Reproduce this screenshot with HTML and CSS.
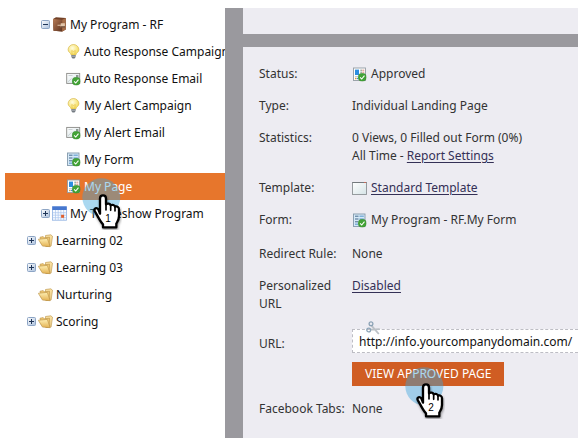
FILE: index.html
```html
<!DOCTYPE html>
<html lang="en">
<head>
<meta charset="utf-8">
<meta name="viewport" content="width=device-width, initial-scale=1">
<title>My Page</title>
<link rel="stylesheet" href="styles.css">
</head>
<body>
<svg class="sprite" aria-hidden="true">
  <defs>
    <linearGradient id="gold" x1="0" y1="0" x2="0" y2="1"><stop offset="0" stop-color="#fff0b4"/><stop offset="1" stop-color="#e3b152"/></linearGradient>
    <linearGradient id="brown" x1="0" y1="0" x2="1" y2="1"><stop offset="0" stop-color="#b77b56"/><stop offset="1" stop-color="#5e3420"/></linearGradient>
    <linearGradient id="paper" x1="0" y1="0" x2="1" y2="1"><stop offset="0" stop-color="#ffffff"/><stop offset="1" stop-color="#d5e3e6"/></linearGradient>
    <linearGradient id="steel" x1="0" y1="0" x2="1" y2="1"><stop offset="0" stop-color="#ffffff"/><stop offset="1" stop-color="#a9bfdc"/></linearGradient>
    <radialGradient id="glow" cx=".4" cy=".35" r=".7"><stop offset="0" stop-color="#fffde0"/><stop offset="1" stop-color="#f3d84e"/></radialGradient>
  </defs>
  <symbol id="plus" viewBox="0 0 9 9">
    <rect x=".5" y=".5" width="8" height="8" rx="1" fill="url(#steel)" stroke="#8da5c5"/>
    <path d="M2 4.5h5M4.5 2v5" stroke="#1f3558"/>
  </symbol>
  <symbol id="minus" viewBox="0 0 9 9">
    <rect x=".5" y=".5" width="8" height="8" rx="1" fill="url(#steel)" stroke="#8da5c5"/>
    <path d="M2 4.5h5" stroke="#1f3558"/>
  </symbol>
  <symbol id="check" viewBox="0 0 8 8">
    <circle cx="4" cy="4" r="3.8" fill="#43a336" stroke="#2c7f26" stroke-width=".4"/>
    <path d="M2 4.2l1.5 1.5L6.1 2.5" fill="none" stroke="#fff" stroke-width="1"/>
  </symbol>
  <symbol id="program" viewBox="0 0 15 15">
    <path d="M1 2L4 .3 13.8 1.100V12.500l-3.500 2-8.800-.7z" fill="#714026"/>
    <path d="M1 2l9.200.8v11.700L1.500 13.800z" fill="url(#brown)"/>
    <path d="M10.200 2.800l3.600-1.700V12.500l-3.600 2z" fill="#a66e49"/>
    <path d="M5.500 7.700h3.200V6.200h4.200v4H8.700V8.800H5.500z" fill="#e2c6aa"/>
    <path d="M9 9.900h4" stroke="#4c2a19"/>
  </symbol>
  <symbol id="bulb" viewBox="0 0 15 15">
    <path d="M7.500.5a5.300 5.300 0 0 0-5.400 5.300C2.100 8.300 5 9 5.200 11h4.600c.2-2 3.100-2.700 3.100-5.200A5.300 5.300 0 0 0 7.500.5z" fill="url(#glow)" stroke="#d9b94a" stroke-width=".7"/>
    <path d="M6.200 10.500L5.700 6.500l1.800 1 1.800-1-.5 4" fill="none" stroke="#e7c33f" stroke-width=".6"/>
    <path d="M5.300 11h4.400v2L8.500 14.500h-2L5.300 13z" fill="#747b82"/>
    <path d="M5.300 12.200h4.400" stroke="#c8cdd2" stroke-width=".7"/>
  </symbol>
  <symbol id="email" viewBox="0 0 15 15">
    <rect x=".7" y="2.400" width="13" height="10" fill="url(#paper)" stroke="#8a8a86" stroke-width=".9"/>
    <path d="M2 10.800L5.500 7.500M2.500 4.500h4" fill="none" stroke="#b9c2c4" stroke-width=".7"/>
    <rect x="10" y="4" width="2.400" height="2.400" fill="#8b9690"/>
    <use href="#check" x="6" y="6" width="8.500" height="8.500"/>
  </symbol>
  <symbol id="form" viewBox="0 0 15 15">
    <rect x="1.500" y="1" width="11.500" height="12.500" fill="#d6e9f8" stroke="#8399ab" stroke-width=".9"/>
    <path d="M3 3.200h3.500M3 6h3.500M3 8.800h3" stroke="#46698a"/>
    <path d="M7.500 3.200h4.300M7.500 6h4.300M3 11.200h3" stroke="#7fb0d8" stroke-width="1.400"/>
    <use href="#check" x="6" y="6" width="8.500" height="8.500"/>
  </symbol>
  <symbol id="page" viewBox="0 0 15 15">
    <rect x="1.500" y="1" width="12" height="12.500" fill="#fff" stroke="#929ba3" stroke-width=".9"/>
    <rect x="3" y="2.600" width="4" height="5.400" fill="#2d8ee0"/>
    <path d="M8.300 3.200h1.700M8.300 5.200h1.700" stroke="#7a8d7d"/>
    <path d="M10.300 3.200h2M10.300 5.200h2" stroke="#dd8674"/>
    <path d="M3 9.600h3" stroke="#b9c6d2"/>
    <path d="M3 11.500h1.500" stroke="#e59d35" stroke-width="1.300"/><path d="M4.800 11.500h1.500" stroke="#3a8ed6" stroke-width="1.300"/>
    <use href="#check" x="6" y="6" width="8.500" height="8.500"/>
  </symbol>
  <symbol id="calendar" viewBox="0 0 15 15">
    <rect x=".5" y=".8" width="14" height="13.400" fill="#f8fbff" stroke="#8db0e2" stroke-width=".8"/>
    <rect x=".3" y=".4" width="14.400" height="3.600" fill="#4677cf"/>
    <path d="M1 6.700h13M1 9.200h13M1 11.700h13M3.500 4v10M6.200 4v10M8.900 4v10M11.600 4v10" stroke="#a9c4ec" stroke-width=".7"/>
    <rect x="9.100" y="8.800" width="3" height="3" fill="#e0602e"/>
  </symbol>
  <symbol id="folder" viewBox="0 0 15 15">
    <path d="M7.500 2.500l5.300-.7 1.700 1.400-1.400 9.800-5.300.6z" fill="#f8dfa0" stroke="#b98e42" stroke-width=".6"/>
    <path d="M2 4.200l3.200-.6 1 1.200 5.300-.6.500 8-3 1-6-2.700z" fill="#efc873" stroke="#b98e42" stroke-width=".6"/>
    <path d="M.3 6.300l9-.9 2.900 8.300-7.700-.6z" fill="url(#gold)" stroke="#b98e42" stroke-width=".6"/>
  </symbol>
  <symbol id="template" viewBox="0 0 15 15">
    <rect x=".5" y="1.500" width="14" height="12" fill="url(#paper)" stroke="#8d9295" stroke-width=".9"/>
    <path d="M.5 1.500h14" stroke="#73797d"/><path d="M12 1.500h2" stroke="#c46c5c"/>
  </symbol>
  <symbol id="scissors" viewBox="0 0 15 15">
    <path d="M5.300 4.300L12.800 13M4 8.700l9.800-.6" stroke="#bcc1c6" stroke-width="1.800"/>
    <circle cx="5" cy="2.800" r="1.900" fill="none" stroke="#8ca3b6" stroke-width="1.300"/>
    <circle cx="2.700" cy="9" r="1.900" fill="none" stroke="#8ca3b6" stroke-width="1.300"/>
  </symbol>
  <symbol id="hand" viewBox="0 0 120 156">
    <path d="M54 107V62c0-13 18-13 18 0v17c5-4 12-2 14 3 5-3 12-1 13 4 6-2 12 1 12 8v20c0 11-4 16-8 23v11H63v-9c-7-7-12-17-17-26l-8-14c-3-9 6-11 11-5z" fill="#fff" stroke="#000" stroke-width="7" stroke-linejoin="round"/>
    <path d="M72 76v20M86 81v16M99 86v13" stroke="#000" stroke-width="5" stroke-linecap="round"/>
  </symbol>
</svg>

<main class="app">
  <nav class="tree" aria-label="Marketing activities">
    <ul class="tree-list">
      <li class="node level-2"><button class="toggle" aria-label="Collapse"><svg><use href="#minus"/></svg></button><svg class="icon"><use href="#program"/></svg><span>My Program - RF</span></li>
      <li class="node level-3"><svg class="icon"><use href="#bulb"/></svg><span>Auto Response Campaign</span></li>
      <li class="node level-3"><svg class="icon"><use href="#email"/></svg><span>Auto Response Email</span></li>
      <li class="node level-3"><svg class="icon"><use href="#bulb"/></svg><span>My Alert Campaign</span></li>
      <li class="node level-3"><svg class="icon"><use href="#email"/></svg><span>My Alert Email</span></li>
      <li class="node level-3"><svg class="icon"><use href="#form"/></svg><span>My Form</span></li>
      <li class="node level-3 selected"><svg class="icon"><use href="#page"/></svg><span>My Page</span>
        <svg class="pointer pointer-tree" viewBox="0 0 120 156"><circle cx="58" cy="58" r="57"/><use class="hand" href="#hand"/><text x="78" y="132">1</text></svg></li>
      <li class="node level-2"><button class="toggle" aria-label="Expand"><svg><use href="#plus"/></svg></button><svg class="icon"><use href="#calendar"/></svg><span>My Tradeshow Program</span></li>
      <li class="node level-1"><button class="toggle" aria-label="Expand"><svg><use href="#plus"/></svg></button><svg class="icon"><use href="#folder"/></svg><span>Learning 02</span></li>
      <li class="node level-1"><button class="toggle" aria-label="Expand"><svg><use href="#plus"/></svg></button><svg class="icon"><use href="#folder"/></svg><span>Learning 03</span></li>
      <li class="node level-1 leaf"><svg class="icon"><use href="#folder"/></svg><span>Nurturing</span></li>
      <li class="node level-1"><button class="toggle" aria-label="Expand"><svg><use href="#plus"/></svg></button><svg class="icon"><use href="#folder"/></svg><span>Scoring</span></li>
    </ul>
  </nav>
  <div class="content">
    <div class="panel header-panel"></div>
    <section class="panel details">
      <div class="row"><span>Status:</span><div class="with-icon"><svg class="icon"><use href="#page"/></svg>Approved</div></div>
      <div class="row"><span>Type:</span><div>Individual Landing Page</div></div>
      <div class="row"><span>Statistics:</span><div>0 Views, 0 Filled out Form (0%)<br>All Time - <a href="#">Report Settings</a></div></div>
      <div class="row"><span>Template:</span><div class="with-icon"><svg class="icon"><use href="#template"/></svg><a href="#">Standard Template</a></div></div>
      <div class="row group-end"><span>Form:</span><div class="with-icon"><svg class="icon"><use href="#form"/></svg>My Program - RF.My Form</div></div>
      <div class="row"><span>Redirect Rule:</span><div>None</div></div>
      <div class="row group-end"><span>Personalized URL</span><div><a href="#">Disabled</a></div></div>
      <div class="row url-row"><label for="url">URL:</label>
        <div class="url-box"><input id="url" type="text" readonly value="http://info.yourcompanydomain.com/"><svg class="icon scissors"><use href="#scissors"/></svg></div></div>
      <div class="row action-row"><div class="action"><button class="primary">VIEW APPROVED PAGE</button>
        <svg class="pointer pointer-button" viewBox="0 0 120 156"><circle cx="58" cy="58" r="57"/><use class="hand" href="#hand"/><text x="78" y="132">2</text></svg></div></div>
      <div class="row"><span>Facebook Tabs:</span><div>None</div></div>
    </section>
  </div>
</main>
</body>
</html>
```
FILE: styles.css
```css
* { box-sizing: border-box; }

body {
  margin: 0;
  padding: 8px 7px 6px 5px;
  background: #fff;
  color: #333;
  font: 12px/18px "Noto Sans", "Open Sans", sans-serif;
}

button, input { font: inherit; }

.sprite { position: absolute; width: 0; height: 0; }

.app {
  display: grid;
  grid-template-columns: 220px minmax(0, 1fr);
  min-height: calc(100vh - 14px);
}

.tree { overflow: hidden; color: #111; }

.tree-list { margin: 0; padding: 3px 0 0; list-style: none; }

.node {
  display: flex;
  align-items: center;
  gap: 2px;
  height: 27px;
  white-space: nowrap;
}

.level-1 { padding-left: 22px; }
.level-2 { padding-left: 36px; }
.level-3 { padding-left: 61px; }
.leaf { padding-left: 33px; }

.selected { position: relative; z-index: 1; background: #e7762c; color: #fff; }

.icon { flex: none; width: 15px; height: 15px; }

.node span { padding-left: 1px; }

.toggle { flex: none; width: 9px; height: 9px; padding: 0; border: 0; background: none; }
.toggle svg { display: block; width: 9px; height: 9px; }

.content {
  display: flex;
  flex-direction: column;
  gap: 13px;
  padding-left: 18px;
  background: #9a999e;
}

.panel { background: #edecf2; }
.header-panel { height: 26px; }

.details {
  display: flex;
  flex: 1;
  flex-direction: column;
  gap: 14px;
  padding: 18px 0 16px 16px;
}

.row { display: grid; grid-template-columns: 93px minmax(0, 1fr); white-space: nowrap; }
.row > span { padding-right: 8px; white-space: normal; }
.row:last-child > span { padding-right: 0; white-space: nowrap; }
.group-end { margin-bottom: 2px; }

.with-icon { display: flex; align-items: center; gap: 4px; }

a { color: #343056; text-decoration: underline; text-underline-offset: 2px; }

.url-row { align-items: end; }
.url-box { position: relative; }

.url-box input {
  display: block;
  width: 100%;
  height: 24px;
  padding: 0 0 0 6px;
  border: 1px dashed #bdbdc4;
  border-right: 0;
  background: #fff;
  color: #111;
  outline: 0;
}

.scissors { position: absolute; top: -8px; left: 14px; }

.action-row { margin-top: -5px; }
.action { position: relative; grid-column: 2; justify-self: start; }

.primary {
  display: block;
  height: 24px;
  padding: 0 13px;
  border: 0;
  background: #d05d23;
  color: #fff;
}

.pointer {
  position: absolute;
  width: 40px;
  height: 52px;
}

.pointer circle { fill: rgba(58, 165, 220, .43); }
.pointer text { font: 30px "Liberation Sans", sans-serif; text-anchor: middle; }
.hand { filter: drop-shadow(2px 5px 3px rgba(0, 0, 0, .4)); }
.pointer-tree { top: 5px; left: 77px; }
.pointer-button { top: 5px; left: 53px; }
```
